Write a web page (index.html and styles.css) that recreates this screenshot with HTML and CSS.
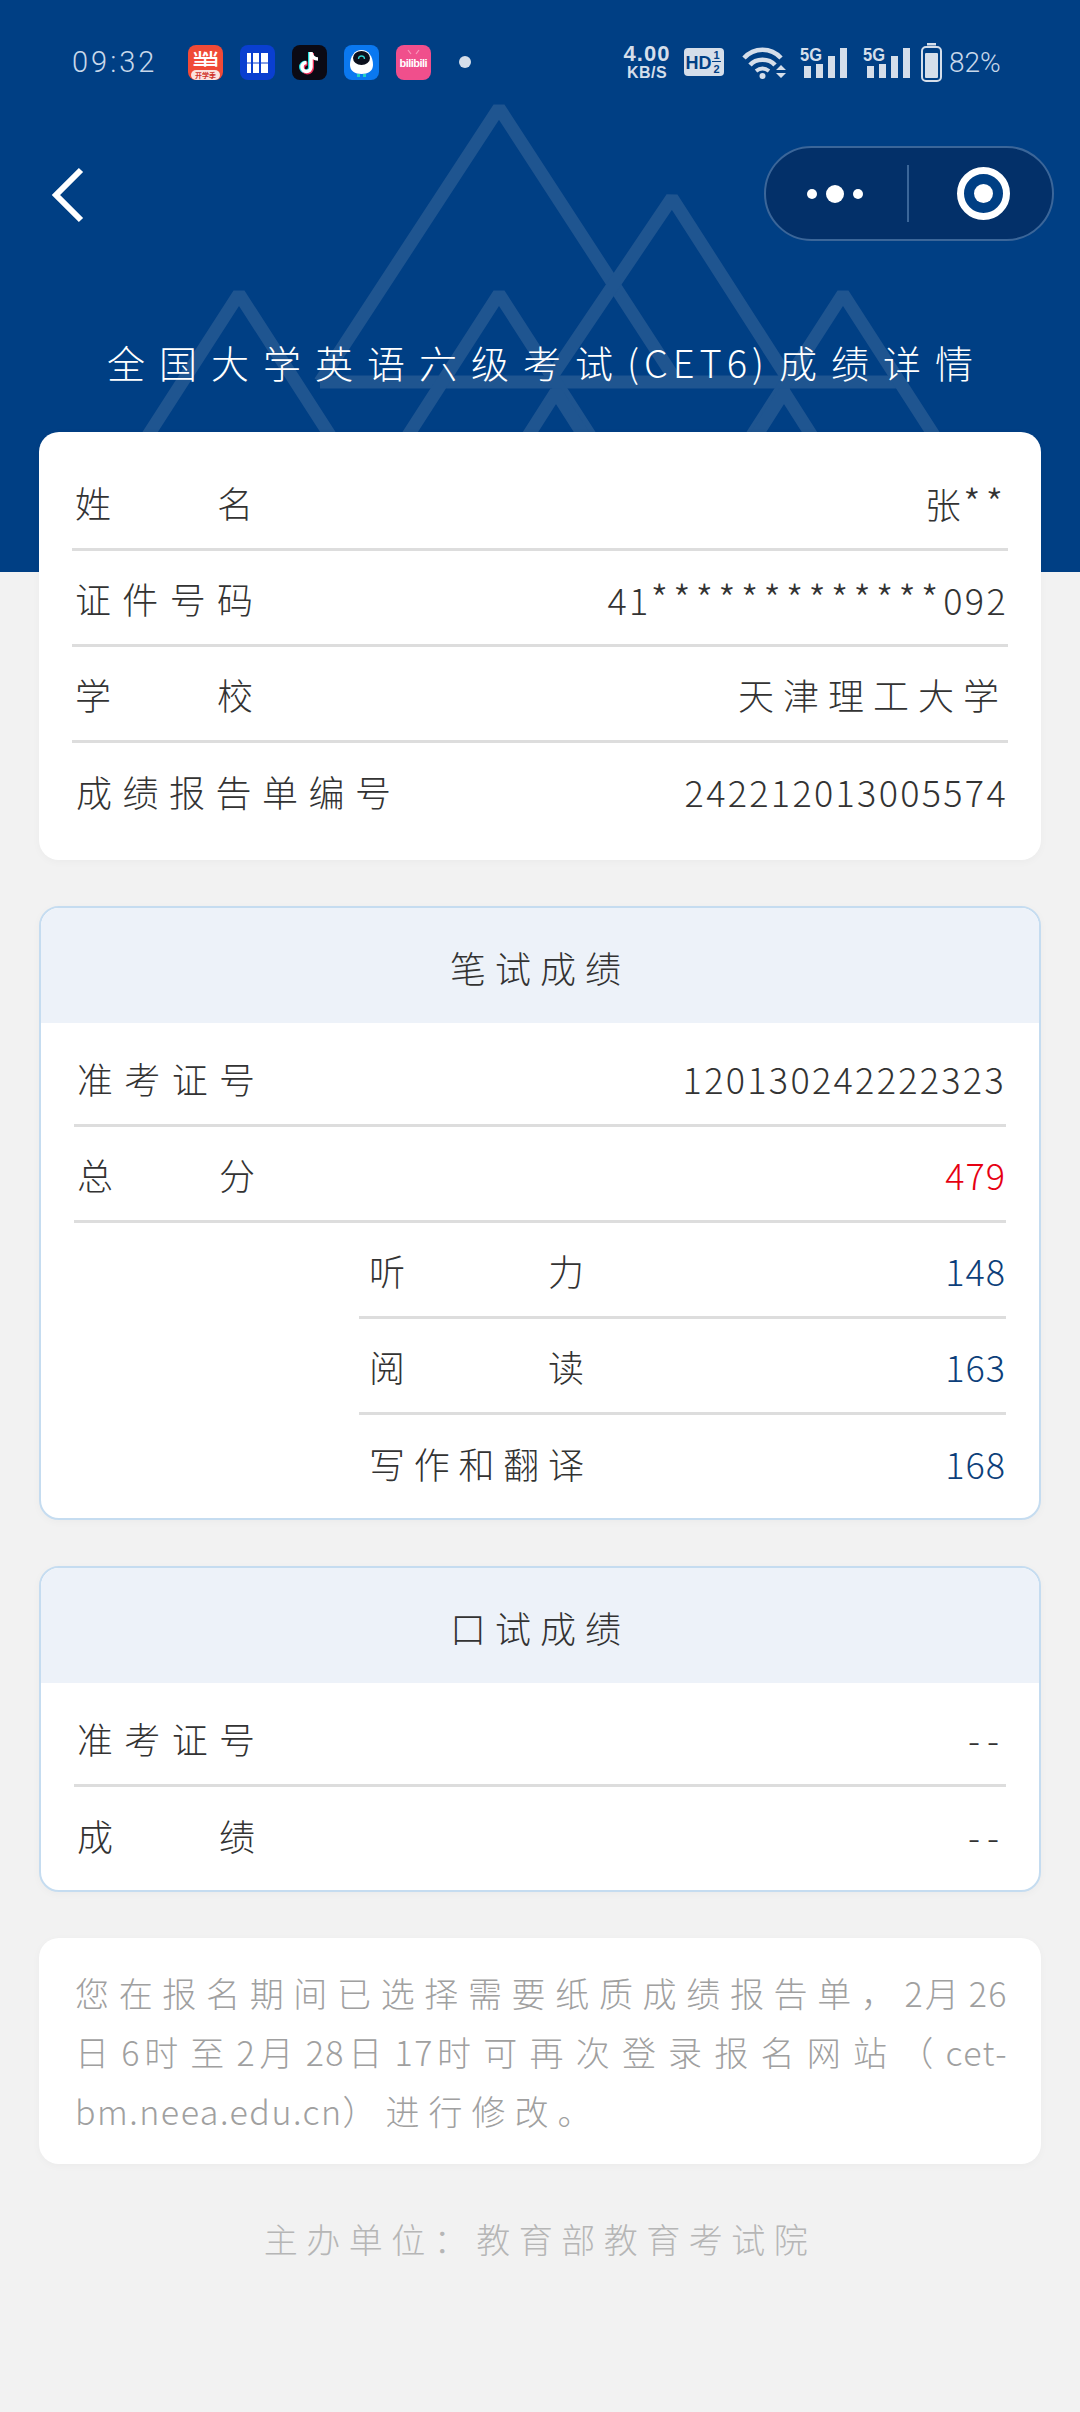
FILE: index.html
```html
<!DOCTYPE html>
<html lang="zh-CN">
<head>
  <meta charset="UTF-8" />
  <meta name="viewport" content="width=device-width, initial-scale=1.0" />
  <title>成绩详情</title>
  <link rel="stylesheet" href="styles.css">
</head>
<body>
  <div class="header">
    <!-- mountains behind the title -->
    <svg class="mountains" width="1080" height="572" viewBox="0 0 1080 572" fill="none" stroke="#1f5590" stroke-width="13" stroke-linejoin="bevel">
      <path d="M320 382L499 108L677 382" />
      <path d="M548 382L672 198L790 382" />
      <path d="M320 382H900" />
      <path d="M60 572L239 294L418 572" />
      <path d="M320 572L499 294L678 572" />
      <path d="M664 572L843 294L1022 572" />
      <path d="M500 480L556 392L612 480" />
      <path d="M728 480L784 392L840 480" />
    </svg>

    <div class="statusbar">
      <div class="status-left">
        <span class="clock">09:32</span>
        <svg class="app" viewBox="0 0 35 35">
          <rect width="35" height="35" rx="8" fill="#f04a37" />
          <text x="17.5" y="20" text-anchor="middle" class="app-text" font-size="16" fill="#fff" textLength="27">当当</text>
          <rect x="3" y="25" width="29" height="10" rx="5" fill="#fbe3df" />
          <text x="17.5" y="33" text-anchor="middle" class="app-text" font-size="7" fill="#d0342c">开学季</text>
        </svg>
        <svg class="app" viewBox="0 0 35 35">
          <rect width="35" height="35" rx="8" fill="#0a3fd0" />
          <path d="M7 8h4v20H7zM13 8h6v20h-6zM21 8h7v20h-7z" fill="#fff" />
          <path d="M7 18H28" stroke="#0a3fd0" stroke-width="1" />
        </svg>
        <svg class="app" viewBox="0 0 35 35">
          <rect width="35" height="35" rx="8" fill="#0b0a14" />
          <path d="M19 7v15a4.5 4.5 0 1 1-4.5-4.5" fill="none" stroke="#25e0e0" stroke-width="4" transform="translate(-1 0)" />
          <path d="M19 7v15a4.5 4.5 0 1 1-4.5-4.5" fill="none" stroke="#f0305a" stroke-width="4" transform="translate(1 1)" />
          <path d="M19 7v15a4.5 4.5 0 1 1-4.5-4.5M19 8c1 4 4 6 7 6" fill="none" stroke="#fff" stroke-width="3.5" />
        </svg>
        <svg class="app" viewBox="0 0 35 35">
          <rect width="35" height="35" rx="8" fill="#0a78f0" />
          <path d="M6 20C6 11 11 5 17.5 5S29 11 29 20c0 6-5 9-11.500 9S6 26 6 20z" fill="#fff" />
          <ellipse cx="17.5" cy="13" rx="8.500" ry="7" fill="#0b0f1c" />
          <path d="M14.500 14a3 3 0 0 1 6 0" fill="none" stroke="#2fd0d0" stroke-width="1.300" />
          <path d="M13 29h3v3h-3zM19 29h3v3h-3z" fill="#22cfc0" />
        </svg>
        <svg class="app" viewBox="0 0 35 35">
          <rect width="35" height="35" rx="8" fill="#f04f8c" />
          <text x="17.5" y="22" text-anchor="middle" class="app-latin" font-size="11" fill="#fff" textLength="28">bilibili</text>
          <path d="M12 5l3 4M23 5l-3 4" stroke="#f79abd" stroke-width="1.200" />
        </svg>
        <span class="status-dot"></span>
      </div>

      <div class="status-right">
        <span class="speed"><b>4.00</b><b class="speed-unit">KB/S</b></span>
        <svg class="hd" width="40" height="28" viewBox="0 0 40 28">
          <rect width="40" height="28" rx="4" fill="#d5deea" />
          <text x="1.500" y="21" class="status-svg-text" font-size="18" fill="#003f84">HD</text>
          <text x="29.500" y="11" class="status-svg-text" font-size="11" fill="#003f84">1</text>
          <path d="M28 13.500h9" stroke="#003f84" stroke-width="1" />
          <text x="29.500" y="25" class="status-svg-text" font-size="11" fill="#003f84">2</text>
        </svg>
        <svg class="wifi" width="45" height="34" viewBox="0 0 45 34" fill="none" stroke="#d5deea" stroke-width="4.500">
          <path d="M2 13C12 2 29 2 39 13" />
          <path d="M8 20C14 13 27 13 33 20" />
          <path d="M14 26c4-3 9-3 13 0" stroke-width="4" />
          <circle cx="20.500" cy="31" r="3" fill="#d5deea" stroke="none" />
          <path d="M39 20l-5 5h10zM34 28h10l-5 5z" fill="#d5deea" stroke="none" />
        </svg>
        <svg class="signal" width="47" height="32" viewBox="0 0 47 32" fill="#d5deea">
          <text x="0" y="15" class="status-svg-text" font-size="18" textLength="22" lengthAdjust="spacingAndGlyphs">5G</text>
          <rect x="4" y="20" width="7" height="12" />
          <rect x="16" y="18" width="7" height="14" />
          <rect x="28" y="10" width="7" height="22" />
          <rect x="40" y="2" width="7" height="30" />
        </svg>
        <svg class="signal" width="47" height="32" viewBox="0 0 47 32" fill="#d5deea">
          <text x="0" y="15" class="status-svg-text" font-size="18" textLength="22" lengthAdjust="spacingAndGlyphs">5G</text>
          <rect x="4" y="20" width="7" height="12" />
          <rect x="16" y="18" width="7" height="14" />
          <rect x="28" y="10" width="7" height="22" />
          <rect x="40" y="2" width="7" height="30" />
        </svg>
        <svg class="battery" width="21" height="39" viewBox="0 0 21 39">
          <rect x="6" y="0" width="9" height="2.500" fill="#d5deea" />
          <rect x="1" y="4" width="19" height="34" rx="4" fill="none" stroke="#d5deea" stroke-width="2" />
          <rect x="4" y="10" width="13" height="25" rx="1" fill="#d5deea" />
        </svg>
        <span class="percent">82%</span>
      </div>
    </div>

    <div class="navbar">
      <svg class="back" width="36" height="60" viewBox="0 0 36 60" fill="none" stroke="#fff" stroke-width="6">
        <path d="M31 3L6 28L31 53" />
      </svg>
      <div class="capsule">
        <div class="capsule-more">
          <span class="dot"></span>
          <span class="dot dot-big"></span>
          <span class="dot"></span>
        </div>
        <div class="capsule-close"><span class="close-ring"></span></div>
      </div>
    </div>

    <h1>全国大学英语六级考试<span class="title-latin">(CET6)</span>成绩详情</h1>
  </div>

  <div class="content">
    <div class="card card-info">
      <div class="row"><span class="label">姓名</span><span class="value">张<span class="mask">**</span></span></div>
      <div class="row"><span class="label">证件号码</span><span class="value">41<span class="mask">*************</span>092</span></div>
      <div class="row"><span class="label">学校</span><span class="value value-wide">天津理工大学</span></div>
      <div class="row"><span class="label-free">成绩报告单编号</span><span class="value">242212013005574</span></div>
    </div>

    <div class="card card-score">
      <div class="card-title">笔试成绩</div>
      <div class="card-body">
        <div class="row"><span class="label">准考证号</span><span class="value">120130242222323</span></div>
        <div class="row"><span class="label">总分</span><span class="value value-total">479</span></div>
        <div class="row row-sub"><span class="label">听力</span><span class="value value-sub">148</span></div>
        <div class="row row-sub"><span class="label">阅读</span><span class="value value-sub">163</span></div>
        <div class="row row-sub"><span class="label">写作和翻译</span><span class="value value-sub">168</span></div>
      </div>
    </div>

    <div class="card card-score">
      <div class="card-title">口试成绩</div>
      <div class="card-body">
        <div class="row"><span class="label">准考证号</span><span class="value value-empty">--</span></div>
        <div class="row"><span class="label">成绩</span><span class="value value-empty">--</span></div>
      </div>
    </div>

    <div class="card card-notice">您在报名期间已选择需要纸质成绩报告单，<span class="latin">2</span>月<span class="latin">26</span>日<span class="latin">6</span>时至<span class="latin">2</span>月<span class="latin">28</span>日<span class="latin">17</span>时可再次登录报名网站（<span class="latin">cet-</span><span class="latin">bm.neea.edu.cn</span>）进行修改。</div>

    <div class="footer">主办单位：教育部教育考试院</div>
  </div>
</body>
</html>
```

FILE: styles.css
```css
body {
  font-family: "Noto Sans CJK SC", Roboto, sans-serif;
  font-weight: 300;
  background: #f2f2f2;
  margin: 0;
  color: #333;
}

/* header */
.header {
  position: relative;
  height: 572px;
  background: #003f84;
  overflow: hidden;
}
.mountains {
  position: absolute;
  left: 0;
  top: 0;
}
.statusbar {
  position: relative;
  display: flex;
  justify-content: space-between;
  align-items: center;
  height: 124px;
  padding: 0 81px 0 72px;
}
.status-left,
.status-right {
  display: flex;
  align-items: center;
}
.clock {
  width: 116px;
  font-family: Roboto, sans-serif;
  font-weight: 300;
  font-size: 29px;
  letter-spacing: 3px;
  color: #c8d8ea;
}
.app {
  width: 35px;
  height: 35px;
  margin-right: 17px;
}
.app-text {
  font-family: "Noto Sans CJK SC", sans-serif;
  font-weight: 700;
}
.app-latin {
  font-family: "Liberation Sans", sans-serif;
  font-weight: 700;
}
.status-dot {
  width: 12px;
  height: 12px;
  margin-left: 11px;
  border-radius: 50%;
  background: #d5deea;
}
.speed {
  display: flex;
  flex-direction: column;
  align-items: center;
  width: 52px;
  font-family: "Liberation Sans", sans-serif;
  color: #d5deea;
  margin-right: 11px;
}
.speed b {
  font-size: 22px;
  font-weight: 700;
  line-height: 20px;
  letter-spacing: 1px;
}
.speed .speed-unit {
  font-size: 16px;
  line-height: 17px;
  letter-spacing: 0.500px;
}
.status-svg-text {
  font-family: "Liberation Sans", sans-serif;
  font-weight: 700;
}
.hd {
  margin-right: 18px;
}
.wifi {
  margin-right: 13px;
}
.signal {
  margin-right: 16px;
}
.signal + .battery {
  margin-left: -5px;
}
.percent {
  width: 50px;
  margin-left: 7px;
  font-family: Roboto, sans-serif;
  font-weight: 300;
  font-size: 28px;
  white-space: nowrap;
  color: #c8d8ea;
}

.navbar {
  position: relative;
  display: flex;
  justify-content: space-between;
  align-items: center;
  height: 95px;
  margin-top: 22px;
  padding: 0 26px 0 50px;
}
.back {
  margin-top: 6px;
}
.capsule {
  display: flex;
  box-sizing: border-box;
  width: 290px;
  height: 95px;
  background: #033069;
  border: 2px solid #3b6699;
  border-radius: 48px;
  align-items: center;
}
.capsule-more {
  display: flex;
  align-items: center;
  justify-content: center;
  gap: 9px;
  box-sizing: border-box;
  width: 143px;
  height: 57px;
  padding-right: 4px;
  border-right: 2px solid #3b6699;
}
.dot {
  width: 10px;
  height: 10px;
  border-radius: 50%;
  background: #fff;
}
.dot-big {
  width: 18px;
  height: 18px;
}
.capsule-close {
  flex: 1;
  display: flex;
  justify-content: center;
  padding-left: 6px;
}
.close-ring {
  position: relative;
  box-sizing: border-box;
  width: 53px;
  height: 53px;
  border: 7px solid #fff;
  border-radius: 50%;
  background: #003f84;
}
.close-ring::after {
  content: "";
  position: absolute;
  left: 10px;
  top: 10px;
  width: 19px;
  height: 19px;
  border-radius: 50%;
  background: #fff;
}
h1 {
  position: relative;
  margin: 91px 0 0;
  padding-left: 14px;
  font-size: 38px;
  font-weight: 300;
  line-height: 60px;
  letter-spacing: 14px;
  text-align: center;
  color: #fff;
  white-space: nowrap;
}
.title-latin {
  margin-right: 10px;
  letter-spacing: 5px;
}

/* cards */
.content {
  position: relative;
  margin-top: -140px;
  padding: 0 39px;
}
.card {
  box-sizing: border-box;
  margin-bottom: 46px;
  background: #fff;
  border-radius: 20px;
  box-shadow: 0 2px 8px rgba(0, 0, 0, 0.03);
  overflow: hidden;
}
.card-info {
  padding: 23px 33px 21px;
}
.card-score {
  border: 2px solid #c5dcf0;
}
.card-title {
  height: 115px;
  font-size: 36px;
  line-height: 118px;
  letter-spacing: 9px;
  text-align: center;
  background: #edf2f9;
}
.card-body {
  padding: 8px 33px 7px;
}
.row {
  display: flex;
  justify-content: space-between;
  align-items: center;
  box-sizing: border-box;
  height: 96px;
  border-bottom: 3px solid #ddd;
}
.row:last-child {
  border-bottom: none;
}
.row-sub {
  margin-left: 285px;
  padding-left: 10px;
}
.label {
  width: 178px;
  margin-left: 3px;
  font-size: 36px;
  white-space: nowrap;
  text-align-last: justify;
}
.row-sub .label {
  width: 215px;
  margin-left: 0;
}
.label-free {
  margin-left: 4px;
  font-size: 36px;
  letter-spacing: 10.500px;
  white-space: nowrap;
}
.value {
  font-size: 36px;
  letter-spacing: 2.300px;
  color: #333;
}
.mask {
  font-size: 40px;
  letter-spacing: 4.800px;
}
.value-wide {
  letter-spacing: 9px;
}
.value-total {
  letter-spacing: 1px;
  color: #e60012;
}
.value-sub {
  letter-spacing: 1px;
  color: #0d3f7a;
}
.value-empty {
  letter-spacing: 7px;
}
.card-notice {
  height: 226px;
  padding: 25px 33px 0 36px;
  font-size: 34px;
  line-height: 59px;
  letter-spacing: 9px;
  text-align: justify;
  color: #a0a0a0;
}
.latin {
  letter-spacing: 1.500px;
}
.footer {
  margin-top: 50px;
  font-size: 34px;
  line-height: 50px;
  letter-spacing: 8.500px;
  text-align: center;
  color: #b6b6b6;
}
```
